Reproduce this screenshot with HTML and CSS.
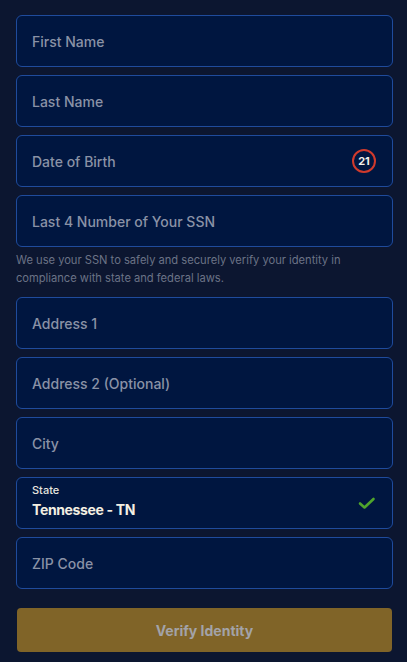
FILE: index.html
```html
<!DOCTYPE html>
<html lang="en">
<head>
<meta charset="utf-8">
<title>Verify Identity</title>
<link rel="stylesheet" href="styles.css">
</head>
<body>
<form class="form">
  <div class="field"><span class="placeholder">First Name</span></div>
  <div class="field"><span class="placeholder">Last Name</span></div>
  <div class="field">
    <span class="placeholder">Date of Birth</span>
    <span class="badge">21</span>
  </div>
  <div class="field"><span class="placeholder">Last 4 Number of Your SSN</span></div>
  <p class="helper">We use your SSN to safely and securely verify your identity in compliance with state and federal laws.</p>
  <div class="field"><span class="placeholder">Address 1</span></div>
  <div class="field"><span class="placeholder">Address 2 (Optional)</span></div>
  <div class="field"><span class="placeholder">City</span></div>
  <div class="field field-filled">
    <div class="filled">
      <span class="label">State</span>
      <span class="value">Tennessee - TN</span>
    </div>
    <svg class="check" width="18" height="14" viewBox="0 0 18 14"><path d="M2 7.5 L6.5 11.5 L15.5 3" fill="none" stroke="#4fa52c" stroke-width="2.6" stroke-linecap="round" stroke-linejoin="round"/></svg>
  </div>
  <div class="field"><span class="placeholder">ZIP Code</span></div>
  <button type="button" class="submit">Verify Identity</button>
</form>
</body>
</html>
```
FILE: styles.css
```css
html, body {
  margin: 0;
  padding: 0;
  background: #0c1630;
}
body {
  font-family: Inter, "Noto Sans", "Liberation Sans", sans-serif;
}
.form {
  display: flex;
  flex-direction: column;
  gap: 8px;
  padding: 15px 14px 0 16px;
}
.field {
  box-sizing: border-box;
  height: 52px;
  border: 1px solid #1f4b9c;
  border-radius: 6px;
  background: #001640;
  display: flex;
  align-items: center;
  justify-content: space-between;
  padding: 0 14px 0 15px;
}
.placeholder {
  color: #8a92a6;
  font-size: 14px;
  font-weight: 500;
}
.badge {
  box-sizing: border-box;
  width: 24px;
  height: 24px;
  border: 2px solid #d03a2c;
  border-radius: 50%;
  color: #f2f0ea;
  font-size: 11px;
  font-weight: 700;
  display: flex;
  align-items: center;
  justify-content: center;
  margin-right: 2px;
}
.helper {
  margin: -4px 0 2px;
  color: #6b7386;
  font-size: 11.15px;
  line-height: 18px;
}
.filled {
  display: flex;
  flex-direction: column;
  gap: 4px;
  padding-bottom: 3px;
}
.label {
  color: #e6e4de;
  font-size: 11px;
  font-weight: 500;
  line-height: 13px;
}
.value {
  color: #f3efe2;
  font-size: 14px;
  font-weight: 700;
  line-height: 18px;
  letter-spacing: -0.35px;
}
.check {
  margin-right: 2px;
}
.submit {
  margin: 11px 1px 0;
  height: 44px;
  border: none;
  border-radius: 4px;
  background: #806428;
  color: #a3a3a8;
  font-family: inherit;
  font-size: 14px;
  font-weight: 700;
}
```
